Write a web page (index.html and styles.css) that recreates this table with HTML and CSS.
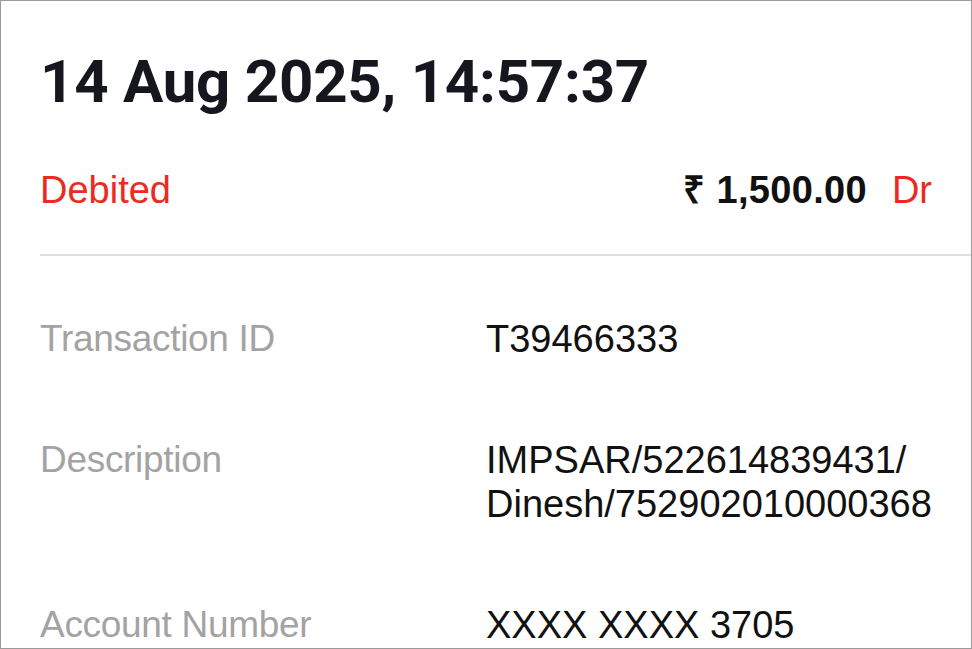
FILE: index.html
```html
<!DOCTYPE html>
<html>
<head>
<meta charset="utf-8">
<link rel="stylesheet" href="styles.css">
</head>
<body>
<div class="screen">
  <h1 class="date">14 Aug 2025, 14:57:37</h1>
  <div class="summary">
    <span class="status">Debited</span>
    <span class="amount-wrap"><span class="amount">₹ 1,500.00</span><span class="drcr">Dr</span></span>
  </div>
  <div class="divider"></div>
  <div class="details">
    <div class="label">Transaction ID</div>
    <div class="value">T39466333</div>
    <div class="label">Description</div>
    <div class="value">IMPSAR/522614839431/<br>Dinesh/752902010000368</div>
    <div class="label">Account Number</div>
    <div class="value">XXXX XXXX 3705</div>
  </div>
</div>
</body>
</html>
```

FILE: styles.css
```css
html, body {
  margin: 0;
  padding: 0;
  background: #ffffff;
}

.screen {
  box-sizing: border-box;
  width: 972px;
  height: 649px;
  border: 1px solid #9a9a9a;
  overflow: hidden;
  padding-top: 51px;
  font-family: "Liberation Sans", Arial, sans-serif;
}

.date {
  margin: 0 0 0 39px;
  font-family: Roboto, "Liberation Sans", sans-serif;
  font-weight: 700;
  font-size: 60px;
  line-height: 60px;
  color: #16161f;
  letter-spacing: -0.25px;
}

.summary {
  display: flex;
  justify-content: space-between;
  align-items: baseline;
  margin-top: 56px;
  padding: 0 39px 0 39px;
  font-size: 38px;
  line-height: 44px;
}

.status {
  color: #ec2a20;
}

.amount {
  font-weight: 700;
  color: #111111;
  letter-spacing: 0.3px;
}

.drcr {
  color: #ec2a20;
  margin-left: 25px;
}

.divider {
  margin: 42px 0 0 39px;
  height: 2px;
  background: #dedede;
}

.details {
  display: grid;
  grid-template-columns: 446px 1fr;
  row-gap: 77px;
  margin-top: 61px;
  padding-left: 39px;
  font-size: 37px;
  line-height: 44px;
}

.label {
  color: #a3a3a3;
  letter-spacing: -0.3px;
}

.value {
  color: #111111;
  font-size: 38px;
}
```
